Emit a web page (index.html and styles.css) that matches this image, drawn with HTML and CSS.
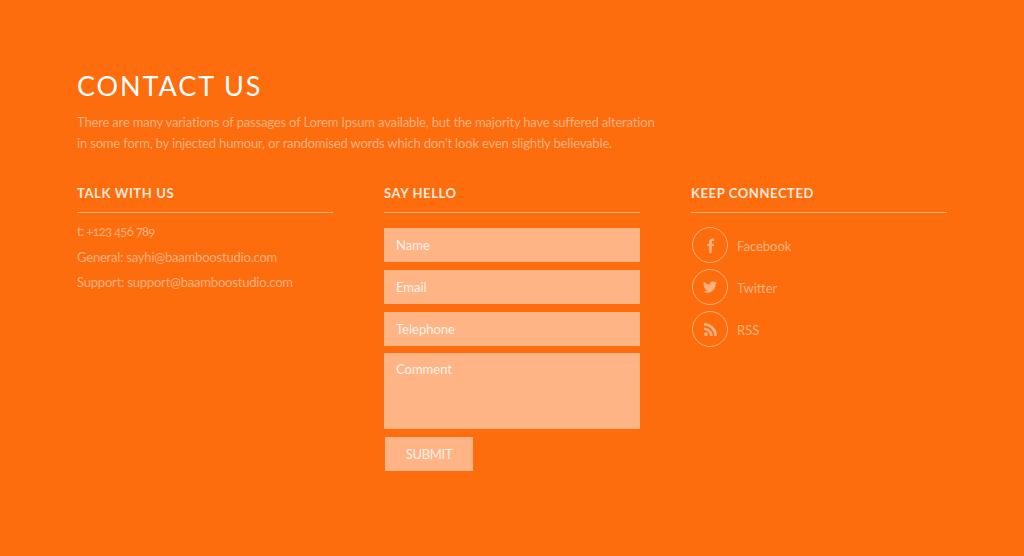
FILE: index.html
```html
<!doctype html>
<html>
<head>
    <title>Contact Us</title>
    <meta charset="utf-8"/>
    <link rel="stylesheet" href="styles.css">
</head>
<body>
    <section class="contact">
        <h1>CONTACT US</h1>
        <p class="intro">There are many variations of passages of Lorem Ipsum available, but the majority have suffered alteration<br>
        in some form, by injected humour, or randomised words which don't look even slightly believable.</p>
        <div class="columns">
            <div class="col">
                <h2>TALK WITH US</h2>
                <ul class="talk">
                    <li class="phone">t: +123 456 789</li>
                    <li>General: sayhi@baamboostudio.com</li>
                    <li>Support: support@baamboostudio.com</li>
                </ul>
            </div>
            <div class="col">
                <h2>SAY HELLO</h2>
                <form class="hello">
                    <input type="text" placeholder="Name">
                    <input type="text" placeholder="Email">
                    <input type="text" placeholder="Telephone">
                    <textarea placeholder="Comment"></textarea>
                    <button type="button">SUBMIT</button>
                </form>
            </div>
            <div class="col">
                <h2>KEEP CONNECTED</h2>
                <ul class="social">
                    <li>
                        <span class="circle">
                            <svg width="15" height="15" viewBox="0 0 16 16"><path d="M9.3 16V8.8h2.2l.4-2.7H9.3V4.4c0-.8.3-1.3 1.3-1.3H12V.7C11.7.6 11 .5 10.100.5 8 .5 6.600 1.800 6.600 4.100v2H4.400v2.700h2.200V16z"/></svg>
                        </span>
                        <span class="label">Facebook</span>
                    </li>
                    <li>
                        <span class="circle">
                            <svg width="14" height="14" viewBox="0 0 24 24"><path d="M23.950 4.570a10 10 0 0 1-2.820.77 4.960 4.960 0 0 0 2.160-2.720 9.900 9.900 0 0 1-3.120 1.180 4.920 4.920 0 0 0-8.380 4.480A13.940 13.940 0 0 1 1.670 3.150a4.920 4.920 0 0 0 1.520 6.570 4.900 4.900 0 0 1-2.230-.62v.06a4.920 4.920 0 0 0 3.950 4.830 4.940 4.940 0 0 1-2.220.08 4.930 4.930 0 0 0 4.600 3.420A9.870 9.870 0 0 1 0 19.540a13.940 13.940 0 0 0 7.550 2.210c9.050 0 14-7.500 14-13.980 0-.21 0-.42-.02-.63a9.940 9.940 0 0 0 2.420-2.570z"/></svg>
                        </span>
                        <span class="label">Twitter</span>
                    </li>
                    <li>
                        <span class="circle">
                            <svg width="13" height="13" viewBox="0 0 16 16"><circle cx="2.400" cy="13.600" r="2.300"/><path d="M0 5.400v3.200a7.400 7.400 0 0 1 7.400 7.400h3.200A10.600 10.600 0 0 0 0 5.400z"/><path d="M0 0v3.200A12.800 12.800 0 0 1 12.800 16H16A16 16 0 0 0 0 0z"/></svg>
                        </span>
                        <span class="label">RSS</span>
                    </li>
                </ul>
            </div>
        </div>
    </section>
</body>
</html>
```

FILE: styles.css
```css
body {
    margin: 0;
    background-color: #fd6c0d;
    font-family: "Lato", sans-serif;
    color: #feb281;
}
.contact {
    padding: 70px 77px 0 77px;
}
h1 {
    margin: 0;
    font-size: 27px;
    line-height: 32px;
    font-weight: 400;
    letter-spacing: 1.9px;
    color: #fff;
}
.intro {
    margin: 10px 0 0 0;
    font-size: 13px;
    line-height: 21px;
    letter-spacing: -0.17px;
}
.columns {
    display: grid;
    grid-template-columns: 256px 256px 256px;
    column-gap: 51px;
    margin-top: 29px;
}
h2 {
    margin: 0;
    padding-bottom: 9px;
    font-size: 13px;
    line-height: 20px;
    font-weight: 700;
    letter-spacing: 0.6px;
    color: #ffe9da;
    border-bottom: 1px solid #feb281;
}
ul {
    list-style: none;
    margin: 0;
    padding: 0;
}
.talk {
    margin-top: 6px;
    font-size: 13px;
    letter-spacing: -0.2px;
}
.talk li {
    line-height: 25.7px;
}
.talk .phone {
    font-variant-numeric: oldstyle-nums;
    letter-spacing: -0.7px;
}
.hello {
    display: flex;
    flex-direction: column;
    align-items: flex-start;
    gap: 8px;
    margin-top: 15px;
}
.hello input, .hello textarea {
    display: block;
    box-sizing: border-box;
    width: 256px;
    border: 0;
    border-radius: 0;
    padding: 0 12px;
    background-color: #feb484;
    font-family: "Lato", sans-serif;
    font-size: 13px;
    color: #fff;
}
.hello input {
    height: 34px;
}
.hello textarea {
    height: 76px;
    margin-top: -1px;
    padding-top: 8px;
    resize: none;
}
.hello ::placeholder {
    color: #fff3ea;
    opacity: 1;
}
.hello button {
    margin-left: 1px;
    width: 88px;
    height: 34px;
    border: 0;
    background-color: #feb484;
    font-family: "Lato", sans-serif;
    font-size: 13px;
    letter-spacing: -0.3px;
    color: #fff3ea;
}
.social {
    margin-top: 14px;
    font-size: 13px;
}
.social li {
    display: flex;
    align-items: center;
    gap: 9px;
    height: 36px;
    margin-bottom: 6px;
}
.label {
    margin-top: 2px;
}
.circle {
    display: flex;
    align-items: center;
    justify-content: center;
    box-sizing: border-box;
    width: 36px;
    height: 36px;
    margin-left: 1px;
    border: 1px solid #feb281;
    border-radius: 50%;
}
.circle svg {
    fill: #feb281;
}
```
